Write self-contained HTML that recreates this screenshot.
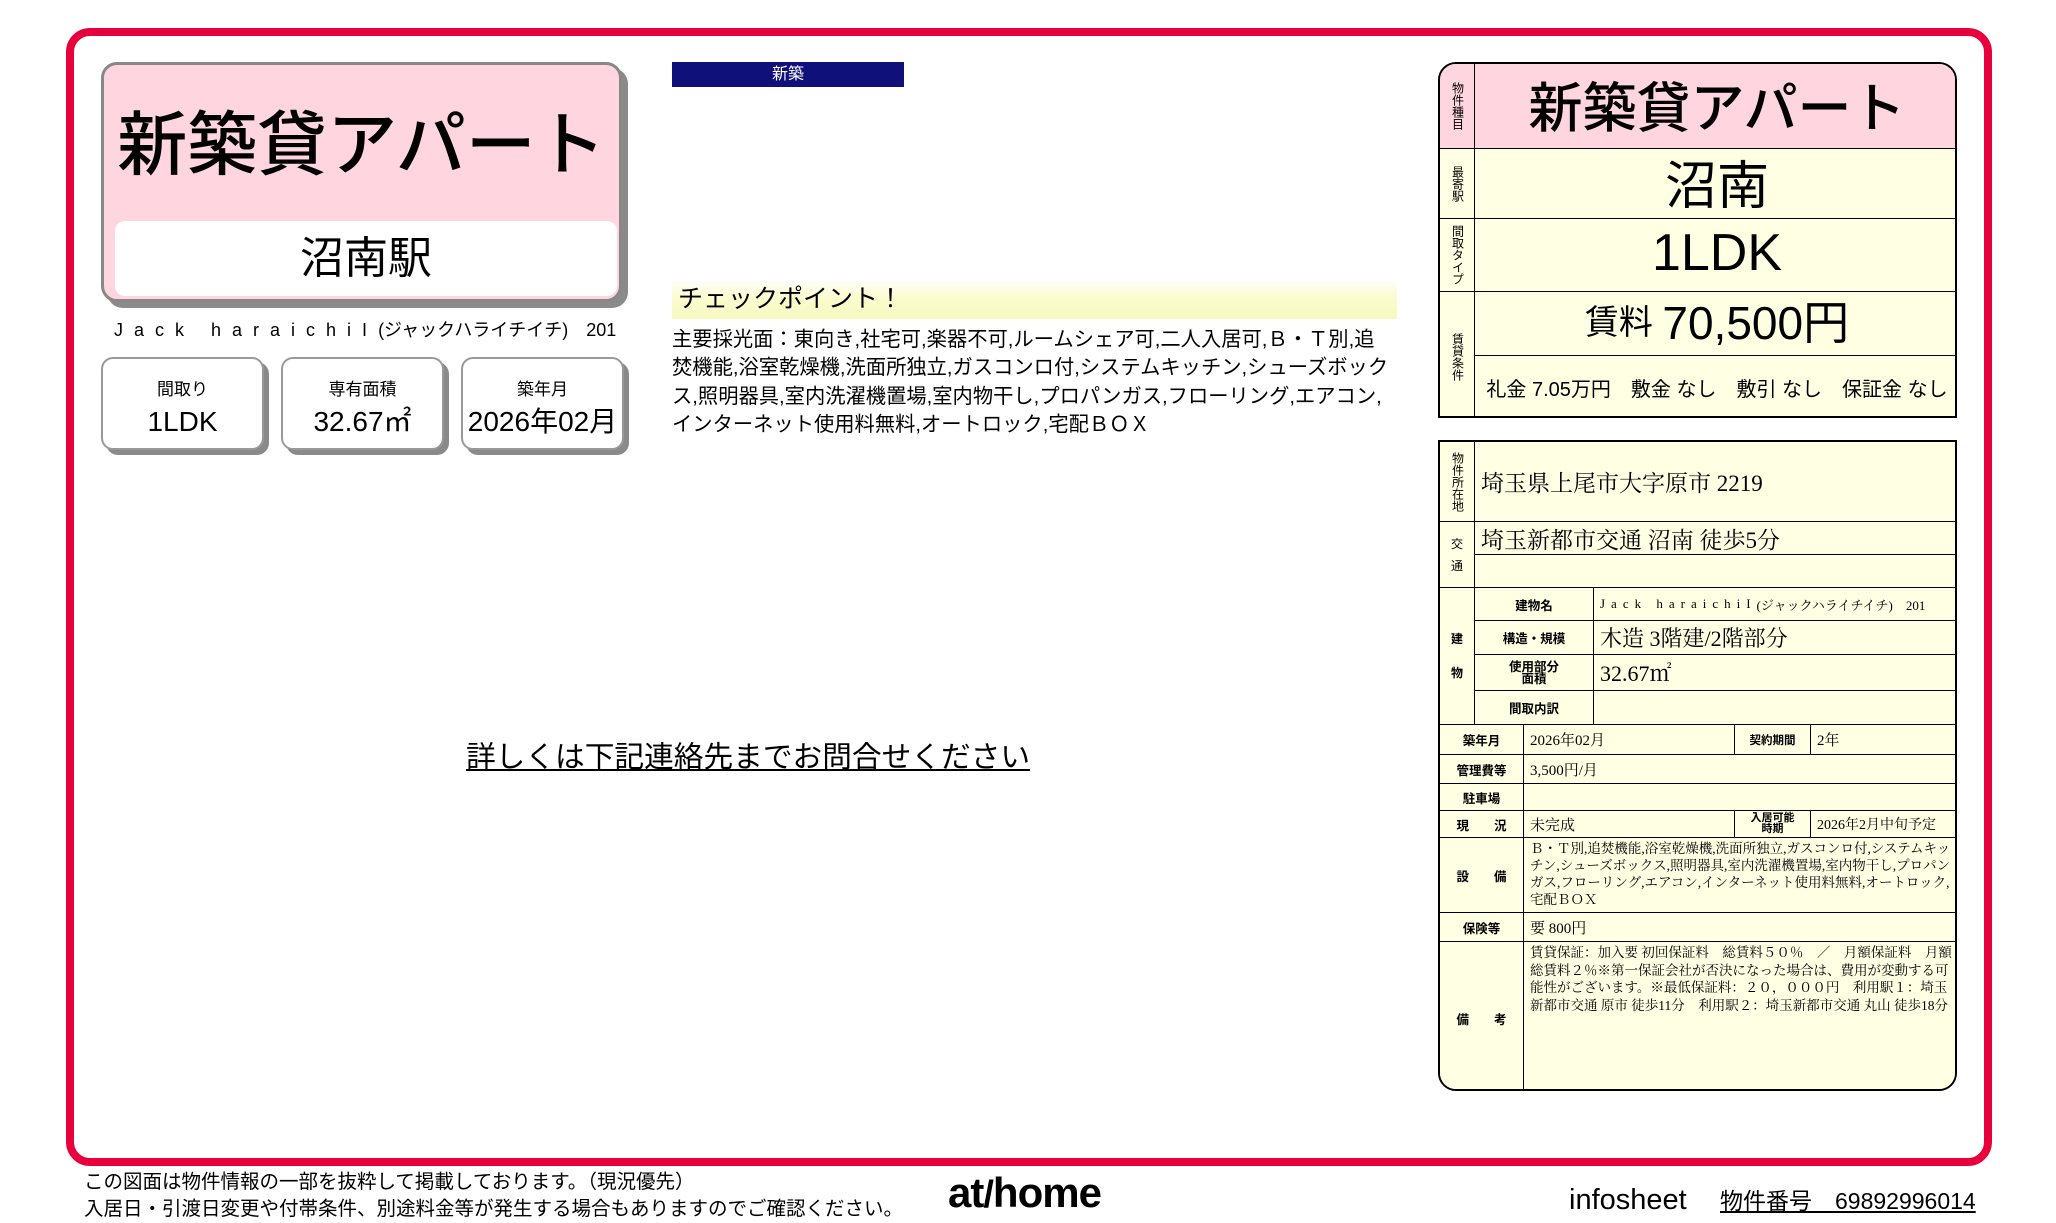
<!DOCTYPE html>
<html><head><meta charset="utf-8"><style>
*{margin:0;padding:0;box-sizing:border-box}
body{width:2056px;height:1222px;background:#fff;position:relative;overflow:hidden;font-family:"Liberation Sans","Noto Sans CJK JP",sans-serif;color:#000}
.a{position:absolute}
.frame{left:66px;top:28px;width:1926px;height:1138px;border:8px solid #e8003c;border-radius:24px}
.card{left:101px;top:62px;width:521px;height:240px;background:#ffd6e0;border:3px solid #888;border-radius:16px;box-shadow:6px 6px 0 #8a8a8a}
.sbox{top:357px;width:163px;height:93px;background:#fff;border:2px solid #999;border-radius:12px;box-shadow:5px 5px 0 #8a8a8a;text-align:center}
.sbox .l{font-size:17px;margin-top:20px;line-height:22px}
.sbox .v{font-size:28px;line-height:36px;margin-top:3px}
.t{position:absolute;box-sizing:border-box;border:1px solid #000;background:#ffffe4;display:flex;align-items:center}
.lab{justify-content:center;font-size:12px;writing-mode:vertical-rl;letter-spacing:0;line-height:13px}
.sl{justify-content:center;font-size:12.5px;font-weight:bold}
.ser{font-family:"Liberation Serif","Noto Serif CJK SC",serif}
</style></head><body>
<div class="a frame"></div>

<div class="a card"></div>
<div class="a" style="left:101px;top:100px;width:521px;text-align:center;font-size:70px;line-height:90px;font-weight:500">新築貸アパート</div>
<div class="a" style="left:115px;top:221px;width:502px;height:75px;background:#fff;border-radius:10px;text-align:center;font-size:44px;line-height:75px">沼南駅</div>
<div class="a" style="left:114px;top:318px;font-size:18px;line-height:24px;white-space:nowrap"><span style="letter-spacing:11px">Jack haraichiI</span>(ジャックハライチイチ)　201</div>

<div class="a sbox" style="left:101px"><div class="l">間取り</div><div class="v">1LDK</div></div>
<div class="a sbox" style="left:281px"><div class="l">専有面積</div><div class="v">32.67㎡</div></div>
<div class="a sbox" style="left:461px"><div class="l">築年月</div><div class="v">2026年02月</div></div>

<div class="a" style="left:672px;top:62px;width:232px;height:25px;background:#10107a;color:#fff;text-align:center;font-size:16px;line-height:25px">新築</div>
<div class="a" style="left:672px;top:279px;width:725px;height:40px;background:linear-gradient(#fff,#fbfcd0 45%,#f6f9c0);font-size:25px;line-height:40px;padding-left:6px">チェックポイント！</div>
<div class="a" style="left:672px;top:326px;width:722px;font-size:20.3px;line-height:28.4px">主要採光面：東向き,社宅可,楽器不可,ルームシェア可,二人入居可,Ｂ・Ｔ別,追焚機能,浴室乾燥機,洗面所独立,ガスコンロ付,システムキッチン,シューズボックス,照明器具,室内洗濯機置場,室内物干し,プロパンガス,フローリング,エアコン,インターネット使用料無料,オートロック,宅配ＢＯＸ</div>

<div class="a" style="left:466px;top:738px;font-size:29.7px;line-height:40px;text-decoration:underline;white-space:nowrap">詳しくは下記連絡先までお問合せください</div>

<!-- table 1 -->
<div class="a" style="left:1438px;top:62px;width:519px;height:356px;border:2px solid #000;border-radius:18px 18px 0 0;overflow:hidden;background:#ffffe4">
 <div class="t lab" style="left:-1px;top:-1px;width:36px;height:86px;background:#ffd6e0">物件種目</div>
 <div class="t" style="left:34px;top:-1px;width:486px;height:86px;background:#ffd6e0;justify-content:center;font-size:54px;font-weight:500;padding-bottom:6px">新築貸アパート</div>
 <div class="t lab" style="left:-1px;top:84px;width:36px;height:71px">最寄駅</div>
 <div class="t" style="left:34px;top:84px;width:486px;height:71px;justify-content:center;font-size:52px;padding-bottom:4px">沼南</div>
 <div class="t lab" style="left:-1px;top:154px;width:36px;height:74px">間取タイプ</div>
 <div class="t" style="left:34px;top:154px;width:486px;height:74px;justify-content:center;font-size:52px;padding-bottom:4px">1LDK</div>
 <div class="t lab" style="left:-1px;top:227px;width:36px;height:132px">賃貸条件</div>
 <div class="t" style="left:34px;top:227px;width:486px;height:65px;justify-content:center;font-size:34px;white-space:nowrap;padding-bottom:8px">賃料&nbsp;<span style="font-size:46px">70,500円</span></div>
 <div class="t" style="left:34px;top:291px;width:486px;height:68px;justify-content:center;font-size:20px;white-space:nowrap;padding-bottom:4px">礼金 7.05万円　敷金 なし　敷引 なし　保証金 なし</div>
</div>

<!-- table 2 -->
<div class="a" style="left:1438px;top:440px;width:519px;height:651px;border:2px solid #000;border-radius:0 0 18px 18px;overflow:hidden;background:#ffffe4">
 <div class="t lab" style="left:-1px;top:-1px;width:36px;height:81px">物件所在地</div>
 <div class="t ser" style="left:34px;top:-1px;width:486px;height:81px;font-size:23px;padding-left:6px">埼玉県上尾市大字原市 2219</div>
 <div class="t" style="left:-1px;top:79px;width:36px;height:67px;justify-content:center;font-size:12px;flex-direction:column;line-height:22px">交<br>通</div>
 <div class="t ser" style="left:34px;top:79px;width:486px;height:34px;font-size:23px;padding-left:6px">埼玉新都市交通 沼南 徒歩5分</div>
 <div class="t" style="left:34px;top:112px;width:486px;height:34px"></div>
 <div class="t" style="left:-1px;top:145px;width:36px;height:138px;justify-content:center;font-size:12px;flex-direction:column;line-height:34px;font-weight:bold">建<br>物</div>
 <div class="t sl" style="left:34px;top:145px;width:120px;height:34px">建物名</div>
 <div class="t ser" style="left:153px;top:145px;width:367px;height:34px;font-size:13px;padding-left:6px;white-space:nowrap"><span style="letter-spacing:6px">Jack haraichiI</span>(ジャックハライチイチ)　201</div>
 <div class="t sl" style="left:34px;top:178px;width:120px;height:35px">構造・規模</div>
 <div class="t ser" style="left:153px;top:178px;width:367px;height:35px;font-size:22px;padding-left:6px">木造 3階建/2階部分</div>
 <div class="t sl" style="left:34px;top:212px;width:120px;height:37px;line-height:12px;text-align:center">使用部分<br>面積</div>
 <div class="t ser" style="left:153px;top:212px;width:367px;height:37px;font-size:22px;padding-left:6px">32.67㎡</div>
 <div class="t sl" style="left:34px;top:248px;width:120px;height:35px">間取内訳</div>
 <div class="t" style="left:153px;top:248px;width:367px;height:35px"></div>
 <div class="t sl" style="left:-1px;top:282px;width:85px;height:31px">築年月</div>
 <div class="t ser" style="left:83px;top:282px;width:212px;height:31px;font-size:15px;padding-left:6px">2026年02月</div>
 <div class="t sl" style="left:294px;top:282px;width:77px;height:31px;font-size:11.5px">契約期間</div>
 <div class="t ser" style="left:370px;top:282px;width:150px;height:31px;font-size:15px;padding-left:6px">2年</div>
 <div class="t sl" style="left:-1px;top:312px;width:85px;height:30px">管理費等</div>
 <div class="t ser" style="left:83px;top:312px;width:437px;height:30px;font-size:15px;padding-left:6px">3,500円/月</div>
 <div class="t sl" style="left:-1px;top:341px;width:85px;height:28px">駐車場</div>
 <div class="t" style="left:83px;top:341px;width:437px;height:28px"></div>
 <div class="t sl" style="left:-1px;top:368px;width:85px;height:28px">現　　況</div>
 <div class="t ser" style="left:83px;top:368px;width:212px;height:28px;font-size:15px;padding-left:6px">未完成</div>
 <div class="t sl" style="left:294px;top:368px;width:77px;height:28px;font-size:11px;line-height:11px;text-align:center">入居可能<br>時期</div>
 <div class="t ser" style="left:370px;top:368px;width:150px;height:28px;font-size:14px;padding-left:6px;white-space:nowrap">2026年2月中旬予定</div>
 <div class="t sl" style="left:-1px;top:395px;width:85px;height:76px">設　　備</div>
 <div class="t ser" style="left:83px;top:395px;width:437px;height:76px;font-size:13.5px;line-height:17px;padding:0 4px 0 6px;align-items:flex-start;padding-top:2px">Ｂ・Ｔ別,追焚機能,浴室乾燥機,洗面所独立,ガスコンロ付,システムキッチン,シューズボックス,照明器具,室内洗濯機置場,室内物干し,プロパンガス,フローリング,エアコン,インターネット使用料無料,オートロック,宅配ＢＯＸ</div>
 <div class="t sl" style="left:-1px;top:470px;width:85px;height:30px">保険等</div>
 <div class="t ser" style="left:83px;top:470px;width:437px;height:30px;font-size:15px;padding-left:6px">要 800円</div>
 <div class="t sl" style="left:-1px;top:499px;width:85px;height:154px">備　　考</div>
 <div class="t ser" style="left:83px;top:499px;width:437px;height:154px;font-size:13.5px;line-height:17.5px;padding:2px 4px 0 6px;align-items:flex-start">賃貸保証：加入要 初回保証料　総賃料５０％　／　月額保証料　月額総賃料２％※第一保証会社が否決になった場合は、費用が変動する可能性がございます。※最低保証料：２０，０００円　利用駅１：埼玉新都市交通 原市 徒歩11分　利用駅２：埼玉新都市交通 丸山 徒歩18分</div>
</div>

<!-- footer -->
<div class="a" style="left:84px;top:1169px;font-size:19.5px;line-height:27px;white-space:nowrap">この図面は物件情報の一部を抜粋して掲載しております。（現況優先）<br>入居日・引渡日変更や付帯条件、別途料金等が発生する場合もありますのでご確認ください。</div>
<div class="a" style="left:948px;top:1168px;font-size:42px;font-weight:bold;line-height:50px;letter-spacing:-1px">at<span style="font-size:38px">/</span>home</div>
<div class="a" style="left:1569px;top:1182px;font-size:29px;line-height:36px">infosheet</div>
<div class="a" style="left:1720px;top:1185px;font-size:23px;line-height:32px;text-decoration:underline;white-space:nowrap">物件番号　69892996014</div>
</body></html>
